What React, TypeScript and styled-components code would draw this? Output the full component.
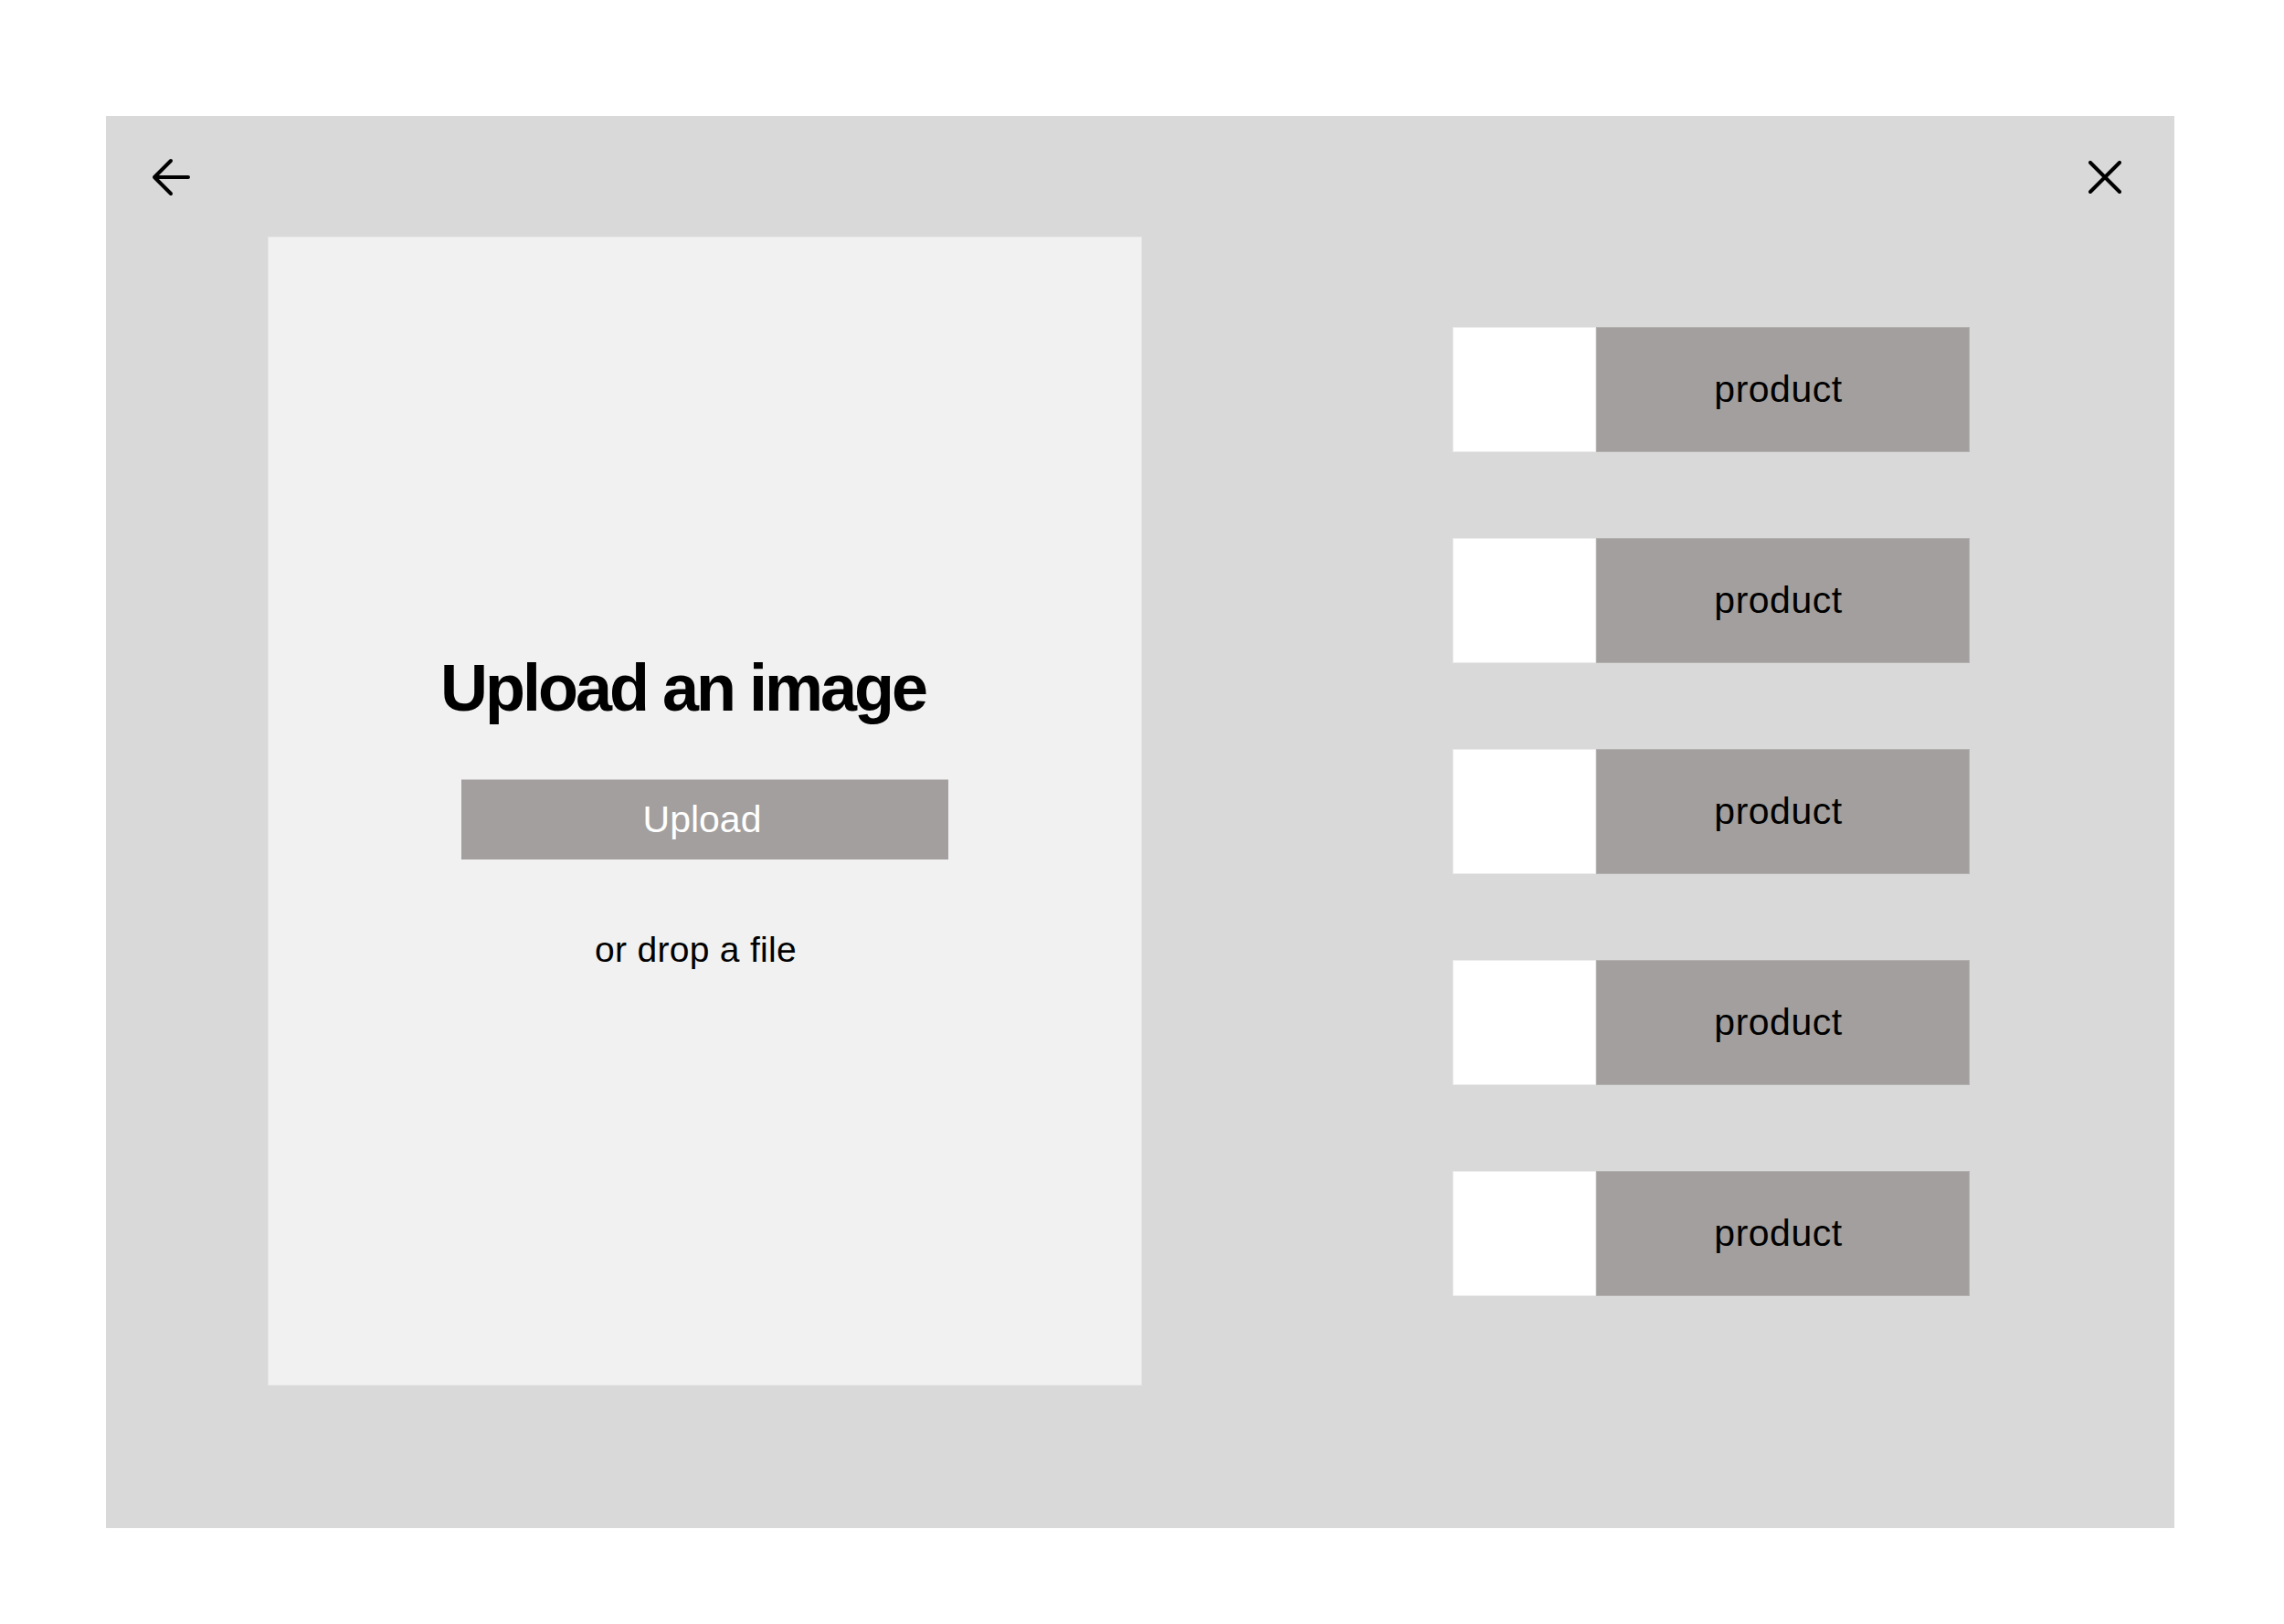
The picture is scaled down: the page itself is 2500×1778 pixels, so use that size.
import React from "react";
import styled, { createGlobalStyle } from "styled-components";

const GlobalStyle = createGlobalStyle`
  html, body {
    margin: 0;
    padding: 0;
    background: #ffffff;
  }
  body {
    font-family: "Liberation Sans", Arial, Helvetica, sans-serif;
    color: #000;
  }
`;

const Page = styled.div`
  width: 2500px;
  height: 1778px;
  padding: 127px 0 0 116px;
  box-sizing: border-box;
`;

const Frame = styled.div`
  width: 2264px;
  height: 1546px;
  background: #d9d9d9;
  display: flex;
  flex-direction: column;
`;

const Header = styled.div`
  display: flex;
  justify-content: space-between;
  align-items: center;
  height: 42px;
  padding: 46px 58px 0 50px;
`;

const IconButton = styled.button`
  border: none;
  background: transparent;
  padding: 0;
  margin: 0;
  display: flex;
  align-items: center;
  justify-content: center;
  cursor: pointer;
  color: #000;
`;

const Body = styled.div`
  display: flex;
  align-items: flex-start;
  gap: 340px;
  padding: 44px 0 0 177px;
`;

const UploadPanel = styled.div`
  width: 957px;
  height: 1258px;
  box-sizing: border-box;
  background: #f1f1f1;
  box-shadow: inset 0 0 0 1px #e6e6e6;
  display: flex;
  flex-direction: column;
  align-items: center;
  padding-top: 458px;
`;

const Heading = styled.h1`
  margin: 0 48px 0 0;
  font-size: 72px;
  line-height: 1;
  font-weight: 700;
  letter-spacing: -3px;
  white-space: nowrap;
`;

const UploadButton = styled.button`
  margin-top: 64px;
  width: 533px;
  height: 88px;
  border: none;
  border-top: 1px solid #c9c7c6;
  background: #a29f9e;
  color: #ffffff;
  font-family: "Liberation Sans", Arial, Helvetica, sans-serif;
  font-size: 41px;
  line-height: 1;
  font-weight: 400;
  display: flex;
  align-items: center;
  justify-content: center;
  padding: 0 6px 0 0;
  cursor: pointer;
`;

const DropHint = styled.p`
  margin: 79px 20px 0 0;
  font-size: 39px;
  line-height: 1;
  letter-spacing: 0.3px;
  white-space: nowrap;
`;

const ProductList = styled.div`
  display: flex;
  flex-direction: column;
  gap: 94px;
  padding-top: 99px;
`;

const ProductRow = styled.div`
  display: flex;
  width: 566px;
  height: 137px;
`;

const Thumb = styled.div`
  width: 157px;
  height: 100%;
  background: #ffffff;
  box-shadow: inset 0 0 0 1px #ececec;
`;

const ProductLabel = styled.div`
  flex: 1;
  height: 100%;
  background: #a29f9e;
  box-shadow: inset 0 0 0 1px #b3b1b0;
  display: flex;
  align-items: center;
  justify-content: center;
  padding-right: 10px;
  font-size: 41px;
  line-height: 1;
  letter-spacing: 0.5px;
  color: #000;
`;

const BackIcon = () => (
  <svg width="42" height="42" viewBox="0 0 42 42" fill="none">
    <path
      d="M3 21H40M21 3L3 21L21 39"
      stroke="#000"
      strokeWidth="4"
      strokeLinecap="round"
      strokeLinejoin="round"
    />
  </svg>
);

const CloseIcon = () => (
  <svg width="36" height="36" viewBox="0 0 36 36" fill="none">
    <path
      d="M2 2L34 34M34 2L2 34"
      stroke="#000"
      strokeWidth="4"
      strokeLinecap="round"
    />
  </svg>
);

const products = ["product", "product", "product", "product", "product"];

export default function App() {
  return (
    <>
      <GlobalStyle />
      <Page>
        <Frame>
          <Header>
            <IconButton aria-label="Back">
              <BackIcon />
            </IconButton>
            <IconButton aria-label="Close">
              <CloseIcon />
            </IconButton>
          </Header>
          <Body>
            <UploadPanel>
              <Heading>Upload an image</Heading>
              <UploadButton>Upload</UploadButton>
              <DropHint>or drop a file</DropHint>
            </UploadPanel>
            <ProductList>
              {products.map((p, i) => (
                <ProductRow key={i}>
                  <Thumb />
                  <ProductLabel>{p}</ProductLabel>
                </ProductRow>
              ))}
            </ProductList>
          </Body>
        </Frame>
      </Page>
    </>
  );
}
